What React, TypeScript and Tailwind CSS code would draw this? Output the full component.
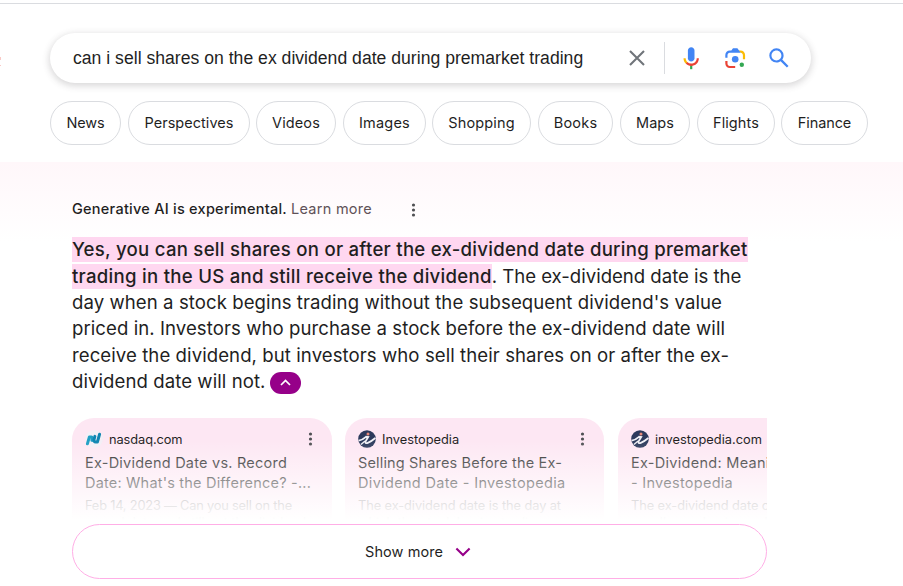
import type { ReactNode } from "react";

function T({ className = "", children }: { className?: string; children: ReactNode }) {
  return <span className={"inline-block shrink-0 whitespace-pre " + className}>{children}</span>;
}

const chips = [
  { label: "News", box: "w-[71px]", tr: "tracking-[-0.16px]" },
  { label: "Perspectives", box: "ml-[7px] w-[122px]", tr: "tracking-[0.034px]" },
  { label: "Videos", box: "ml-[6px] w-[80px]", tr: "tracking-[0.13px]" },
  { label: "Images", box: "ml-[7px] w-[83px]", tr: "tracking-[0.2px]" },
  { label: "Shopping", box: "ml-[6px] w-[99px]", tr: "tracking-[0.15px]" },
  { label: "Books", box: "ml-[7px] w-[75px]", tr: "tracking-[0.2px]" },
  { label: "Maps", box: "ml-[7px] w-[70px]", tr: "tracking-[0.055px]" },
  { label: "Flights", box: "ml-[7px] w-[78px]", tr: "tracking-[0.1px]" },
  { label: "Finance", box: "ml-[6px] w-[87px]", tr: "tracking-[-0.085px]" },
];

function Dots({ className = "" }: { className?: string }) {
  return (
    <svg className={"shrink-0 " + className} width="5" height="14" viewBox="0 0 5 14" fill="#4f5053">
      <circle cx="2.5" cy="2" r="1.6" />
      <circle cx="2.5" cy="7" r="1.6" />
      <circle cx="2.5" cy="12" r="1.6" />
    </svg>
  );
}

function Mic() {
  return (
    <svg width="26.4" height="26.4" viewBox="0 0 24 24">
      <path fill="#4285f4" d="m12 15c1.66 0 3-1.31 3-2.97v-7.02c0-1.66-1.34-3.01-3-3.01s-3 1.34-3 3.01v7.02c0 1.66 1.34 2.97 3 2.97z" />
      <path fill="#34a853" d="m11 18.08h2v3.92h-2z" />
      <path fill="#fbbc04" d="m7.05 16.87c-1.27-1.33-2.05-2.83-2.05-4.87h2c0 1.45 0.56 2.42 1.47 3.38v0.32l-1.15 1.18z" />
      <path fill="#ea4335" d="m12 16.93a4.97 5.25 0 0 1 -3.54 -1.55l-1.41 1.49c1.26 1.34 3.02 2.13 4.95 2.13 3.87 0 6.99-2.92 6.99-7h-1.99c0 2.92-2.24 4.93-5 4.93z" />
    </svg>
  );
}

function Lens() {
  return (
    <svg width="26.4" height="26.4" viewBox="0 0 192 192">
      <circle fill="#34a853" cx="144.07" cy="144" r="16" />
      <circle fill="#4285f4" cx="96.07" cy="104" r="24" />
      <path fill="#ea4335" d="M24,135.2c0,18.11,14.69,32.8,32.8,32.8H96v-16l-40.1-0.1c-8.8,0-15.9-8.19-15.9-17.9v-18H24V135.2z" />
      <path fill="#fbbc04" d="M168,72.8c0-18.11-14.69-32.8-32.8-32.8H116l20,16c8.8,0,16,8.29,16,18v30h16V72.8z" />
      <path fill="#4285f4" d="M112,24l-32,0L68,40H56.8C38.69,40,24,54.69,24,72.8V92h16V74c0-9.71,7.2-18,16-18h80L124,40L112,24z" />
    </svg>
  );
}

function Investopedia() {
  return (
    <svg className="shrink-0" width="18" height="18" viewBox="0 0 18 18">
      <circle cx="9" cy="9" r="8.8" fill="#2c3a5c" />
      <path d="M0.6 10.6C3.6 10.2 6.2 8.4 8 6.8L10.2 7L7.6 11.4C6.8 13 8 13.4 9.8 12.8C12.8 11.8 15 10 17.4 8" fill="none" stroke="#f0f1f6" strokeWidth="1.8" />
      <path d="M3 14.6L7 11" stroke="#f0f1f6" strokeWidth="1.3" />
      <circle cx="10" cy="4" r="1.5" fill="#e58a7a" />
    </svg>
  );
}

function Nasdaq() {
  return (
    <svg className="shrink-0" width="18" height="18" viewBox="0 0 18 18" fill="none" strokeWidth="3" strokeLinecap="round" strokeLinejoin="round">
      <circle cx="9" cy="9" r="8.8" fill="#f3eff6" />
      <path d="M2.4 13.8L4.4 6.9H6.4Q7.6 7 7.2 9L6.9 10.4" stroke="#1f9fc4" />
      <path d="M9.9 6.4L9 9.6Q8.8 12 10.6 12H12.4L14.6 4.2" stroke="#0f86b2" />
    </svg>
  );
}

type Line = { t: string; c: string };
const cards: { site: Line; icon: string; box: string; lines: Line[]; small: Line[] }[] = [
  {
    site: { t: "nasdaq.com", c: "tracking-[-0.075px]" },
    icon: "n",
    box: "w-[260px]",
    lines: [
      { t: "Ex-Dividend Date vs. Record", c: "tracking-[0.225px]" },
      { t: "Date: What's the Difference? -...", c: "tracking-[0.2px]" },
    ],
    small: [
      { t: "Feb 14, 2023 — Can you sell on the", c: "tracking-[-0.188px]" },
      { t: "record date and still get the dividend", c: "" },
    ],
  },
  {
    site: { t: "Investopedia", c: "" },
    icon: "i",
    box: "mr-px w-[259px]",
    lines: [
      { t: "Selling Shares Before the Ex-", c: "tracking-[0.158px]" },
      { t: "Dividend Date - Investopedia", c: "tracking-[0.326px]" },
    ],
    small: [
      { t: "The ex-dividend date is the day at", c: "tracking-[-0.076px]" },
      { t: "which the stock begins trading", c: "" },
    ],
  },
  {
    site: { t: "investopedia.com", c: "tracking-[0.02px]" },
    icon: "i",
    box: "w-[260px]",
    lines: [
      { t: "Ex-Dividend: Meaning and Date", c: "tracking-[0.28px]" },
      { t: "- Investopedia", c: "tracking-[0.276px]" },
    ],
    small: [
      { t: "The ex-dividend date of a stock is", c: "tracking-[-0.07px]" },
      { t: "usually one business day before", c: "tracking-[-0.05px]" },
    ],
  },
];

export default function App() {
  return (
    <div className="relative h-[586px] w-[903px] overflow-hidden bg-white font-['Inter',sans-serif] text-[#1f1f1f]">
      <div className="mt-[3px] h-px bg-[#dadce0]" />
      <div className="absolute top-[57px] left-0 flex flex-col gap-[5px]">
        <span className="h-[3px] w-px bg-[#f9c9c6]" />
        <span className="h-px w-px bg-[#f9c9c6]" />
      </div>
      <div className="mt-[29px] ml-[50px] flex h-[50px] w-[761px] items-center rounded-full bg-white pl-[23px] shadow-[0_2px_7px_1px_rgba(64,60,67,0.2)]">
        <div className="w-[556px] font-['Liberation_Sans',sans-serif] text-[17.6px]">
          <T className="tracking-[0.01px]">can i sell shares on the ex dividend date during premarket trading</T>
        </div>
        <svg width="16" height="16" viewBox="0 0 16 16" stroke="#70757a" strokeWidth="2.1">
          <path d="M1 1L15 15M15 1L1 15" />
        </svg>
        <div className="ml-[19px] h-8 w-px bg-[#dadce0]" />
        <div className="ml-[13px]"><Mic /></div>
        <div className="ml-[18px]"><Lens /></div>
        <svg className="ml-[17px]" width="26.4" height="26.4" viewBox="0 0 24 24" fill="#4285f4">
          <path d="M20.49 19l-5.73-5.73C15.53 12.2 16 10.91 16 9.5A6.5 6.5 0 1 0 9.5 16c1.41 0 2.7-.47 3.77-1.24L19 20.49 20.49 19zM5 9.5C5 7.01 7.01 5 9.5 5S14 7.01 14 9.5 11.99 14 9.5 14 5 11.99 5 9.5z" />
        </svg>
      </div>
      <div className="mt-[18px] ml-[50px] flex text-[14.5px]">
        {chips.map((c) => (
          <div key={c.label} className={"flex h-11 shrink-0 items-center justify-center rounded-full border border-[#dadce0] " + c.box}>
            <T className={c.tr}>{c.label}</T>
          </div>
        ))}
      </div>
      <div className="mt-[17px] h-[424px] bg-linear-to-b from-[#fff7fa] to-white to-[80px] pl-[72px]">
        <div className="flex h-[75px] items-center pt-[19px] text-[14.5px]">
          <T className="font-medium tracking-[0.252px]">Generative AI is experimental.</T>
          <T className="ml-[4px] tracking-[0.266px] text-[#5f5258]">Learn more</T>
          <Dots className="mt-px ml-[38.5px]" />
        </div>
        <div className="text-[18.6px] leading-[25px]">
          <div className="h-[26.4px]">
            <T className="bg-[#ffd7f0] font-medium tracking-[0.26px]">Yes, you can sell shares on or after the ex-dividend date during premarket</T>
          </div>
          <div className="flex h-[26.4px]">
            <T className="mt-[0.6px] h-[25px] bg-[#ffd7f0] font-medium tracking-[0.27px]">trading in the US and still receive the dividend</T>
            <T className="mt-[0.6px] tracking-[-0.02px]">. The ex-dividend date is the</T>
          </div>
          <div className="h-[26.4px]"><T className="tracking-[0.067px]">day when a stock begins trading without the subsequent dividend's value</T></div>
          <div className="h-[26.4px]"><T className="tracking-[0.06px]">priced in. Investors who purchase a stock before the ex-dividend date will</T></div>
          <div className="h-[26.4px]"><T className="tracking-[0.068px]">receive the dividend, but investors who sell their shares on or after the ex-</T></div>
          <div className="flex h-[26.4px]">
            <T className="tracking-[0.065px]">dividend date will not.</T>
            <span className="mt-[3px] ml-[4.5px] flex h-[22px] w-[31px] items-center justify-center rounded-full bg-[#960089]">
              <svg width="11" height="7" viewBox="0 0 11 7" fill="none" stroke="#fff" strokeWidth="1.7">
                <path d="M1 6L5.5 1.5L10 6" />
              </svg>
            </span>
          </div>
        </div>
        <div className="relative mt-[22.6px] flex h-[106px] w-[695px] gap-[13px] overflow-hidden">
          {cards.map((c) => (
            <div key={c.site.t} className={"h-[150px] shrink-0 rounded-t-[22px] bg-[#fde7f3] px-[13px] " + c.box}>
              <div className="flex h-[35px] items-center pt-[8px] pr-[6px] text-[12.8px]">
                {c.icon === "n" ? <Nasdaq /> : <Investopedia />}
                <T className={"ml-1.5 " + c.site.c}>{c.site.t}</T>
                <Dots className="ml-auto" />
              </div>
              <div className="text-[14.5px] leading-5">
                {c.lines.map((l) => <div key={l.t}><T className={l.c}>{l.t}</T></div>)}
              </div>
              <div className="mt-[4px] text-[12.8px] leading-[17px] text-[#7a7278]">
                {c.small.map((l) => <div key={l.t}><T className={l.c}>{l.t}</T></div>)}
              </div>
            </div>
          ))}
          <div className="absolute inset-x-0 top-[22px] bottom-0 bg-linear-to-b from-white/0 to-white to-[80px]" />
        </div>
        <div className="flex h-[55px] w-[695px] items-center rounded-full border border-[#ffaee6] bg-white pl-[292px] text-[14.5px]">
          <T className="tracking-[0.075px]">Show more</T>
          <svg className="mt-px ml-[12px]" width="16" height="10" viewBox="0 0 16 10" fill="none" stroke="#960089" strokeWidth="2.1">
            <path d="M1.4 1.4L8 8L14.6 1.4" />
          </svg>
        </div>
      </div>
    </div>
  );
}
